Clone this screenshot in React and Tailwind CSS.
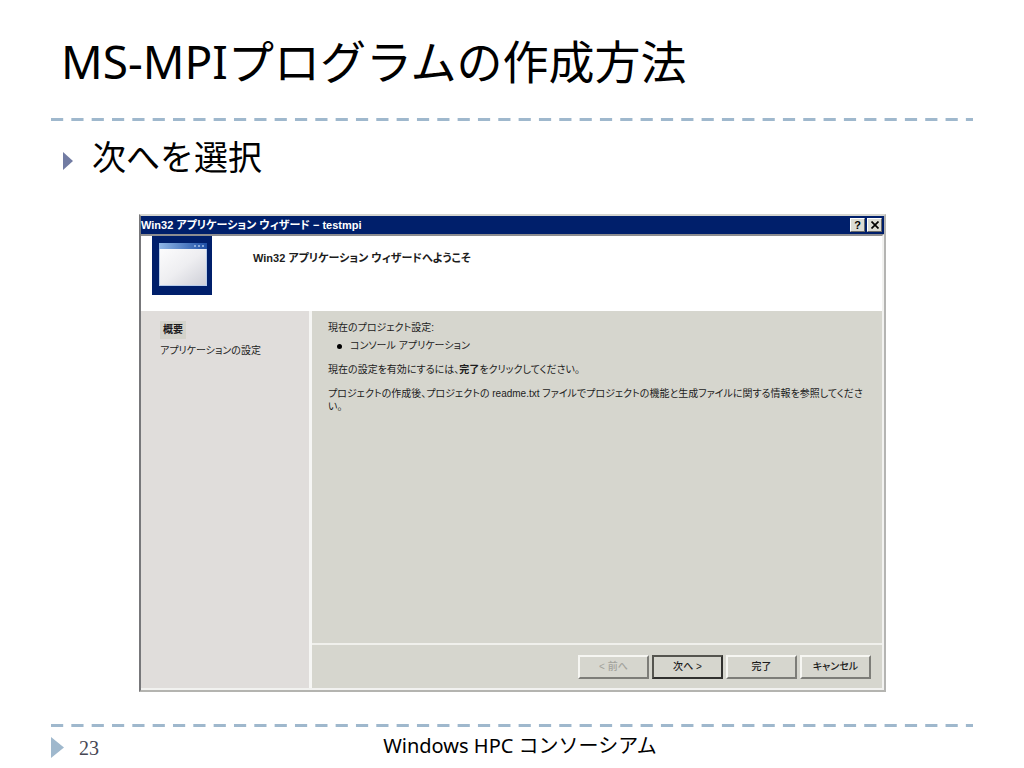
import React from "react";

const slideFont = "font-['Noto_Sans','Noto_Sans_CJK_JP',sans-serif]";
const dialogFont = "font-['Liberation_Sans','Noto_Sans_CJK_JP',sans-serif]";

function DashedRule() {
  return (
    <svg className="block h-[3px] w-full" aria-hidden="true">
      <line
        x1="0"
        y1="1.5"
        x2="100%"
        y2="1.5"
        pathLength="907"
        stroke="#9fb8cd"
        strokeWidth="3"
        strokeDasharray="12 8"
      />
    </svg>
  );
}

function CaptionButton({ label, children }) {
  return (
    <button
      type="button"
      aria-label={label}
      className="flex h-[14px] w-[15px] items-center justify-center border border-t-white border-l-white border-r-[#6b6b68] border-b-[#6b6b68] bg-[#dcdcd4] text-black"
    >
      {children}
    </button>
  );
}

function DialogButton({ children, primary, disabled }) {
  const edge = primary
    ? "border-2 border-t-[#55554f] border-l-[#55554f] border-r-[#30302e] border-b-[#30302e]"
    : "border-2 border-t-[#f6f6f2] border-l-[#f6f6f2] border-r-[#7d7d78] border-b-[#7d7d78]";
  const ink = disabled ? "text-[#a3a39c]" : "text-[#1c1c1c]";
  return (
    <button
      type="button"
      disabled={disabled}
      className={`h-6 w-[71px] bg-[#d6d6ce] text-[10px] leading-4 font-medium ${edge} ${ink}`}
    >
      {children}
    </button>
  );
}

function WizardIcon() {
  return (
    <svg className="ml-[11px] h-[59px] w-[60px]" viewBox="0 0 60 59" aria-hidden="true">
      <defs>
        <linearGradient id="pane" x1="0" y1="0" x2="1" y2="1">
          <stop offset="0" stopColor="#fcfcfd" />
          <stop offset="0.5" stopColor="#eeeef1" />
          <stop offset="1" stopColor="#cfd0d8" />
        </linearGradient>
        <linearGradient id="bar" x1="0" y1="0" x2="1" y2="0">
          <stop offset="0" stopColor="#8fb6e6" />
          <stop offset="1" stopColor="#1e4fa6" />
        </linearGradient>
      </defs>
      <rect width="60" height="59" fill="#001f6b" />
      <rect x="7" y="7" width="48" height="43" fill="#b9cdea" />
      <rect x="7" y="7" width="48" height="6" fill="url(#bar)" />
      <path d="M42 10h2M46 10h2M50 10h2" stroke="#a9c3ea" strokeWidth="1.5" />
      <rect x="8" y="13" width="46" height="36" fill="url(#pane)" />
    </svg>
  );
}

function WizardDialog() {
  return (
    <section
      aria-label="Win32 アプリケーション ウィザード - testmpi"
      className={`ml-[88px] mr-[87px] flex flex-1 flex-col border-2 border-t-[#d6d6d0] border-l-[#77777a] border-r-[#b4b4b2] border-b-[#b4b4b0] bg-[#d6d6ce] text-[10px] text-[#1c1c1c] [font-feature-settings:'palt'] ${dialogFont}`}
    >
      <div className="flex h-[18px] items-center justify-between bg-[#001f6b] pr-0.5 text-white">
        <h2 className="text-[11px] font-bold">Win32 アプリケーション ウィザード − testmpi</h2>
        <div className="flex gap-0.5">
          <CaptionButton label="ヘルプ">
            <span className="text-[11px] leading-3 font-bold">?</span>
          </CaptionButton>
          <CaptionButton label="閉じる">
            <svg className="size-2" viewBox="0 0 8 8" aria-hidden="true">
              <path d="M0.5 0.5l7 7M7.5 0.5l-7 7" stroke="currentColor" strokeWidth="1.7" />
            </svg>
          </CaptionButton>
        </div>
      </div>
      <header className="flex h-[77px] items-start border-t-2 border-r-2 border-t-[#8d8d90] border-r-[#f2f2f0] bg-white">
        <WizardIcon />
        <h3 className="mt-3 ml-[41px] text-[11px] leading-5 font-bold">
          Win32 アプリケーション ウィザードへようこそ
        </h3>
      </header>
      <div className="flex flex-1 border-r-2 border-b-2 border-[#f2f2f0]">
        <nav className="flex w-[171px] shrink-0 flex-col items-start border-r-[3px] border-[#f6f6f4] bg-[#e0dddb] pt-[10px] pl-[19px]">
          <a href="#overview" className="bg-[#d3d3cb] px-[3px] leading-[18px] font-bold">
            概要
          </a>
          <a href="#settings" className="mt-0.5 leading-5">
            アプリケーションの設定
          </a>
        </nav>
        <div className="flex flex-1 flex-col">
          <div className="flex-1 pt-2 pl-4">
            <p className="leading-[18px]">現在のプロジェクト設定:</p>
            <ul>
              <li className="flex items-center leading-[18px]">
                <span className="mr-2 ml-[9px] size-[5px] rounded-full bg-black" />
                コンソール アプリケーション
              </li>
            </ul>
            <p className="mt-1.5 leading-[18px]">
              現在の設定を有効にするには、<b>完了</b>をクリックしてください。
            </p>
            <p className="mt-2 leading-[13px]">
              プロジェクトの作成後、プロジェクトの readme.txt ファイルでプロジェクトの機能と生成ファイルに関する情報を参照してくださ
              <br />
              い。
            </p>
          </div>
          <div className="flex justify-end gap-[3px] border-t-2 border-[#f0f0ec] pt-2.5 pr-[11px] pb-[9px]">
            <DialogButton disabled>&lt; 前へ</DialogButton>
            <DialogButton primary>次へ &gt;</DialogButton>
            <DialogButton>完了</DialogButton>
            <DialogButton>キャンセル</DialogButton>
          </div>
        </div>
      </div>
    </section>
  );
}

export default function App() {
  return (
    <div className={`flex min-h-screen flex-col bg-white px-[51px] text-black ${slideFont}`}>
      <h1 className="pt-[26px] pb-[22px] pl-[10px] text-[46px] leading-[70px]">
        MS-MPIプログラムの作成方法
      </h1>
      <DashedRule />
      <main className="flex flex-1 flex-col">
        <ul className="pt-3 pb-8">
          <li className="flex items-center pl-3 text-[34px] leading-[49px]">
            <svg className="mt-1.5 mr-[19px] h-[18px] w-[10px]" viewBox="0 0 10 18" aria-hidden="true">
              <path d="M0 0L10 9L0 18Z" fill="#727ca3" />
            </svg>
            次へを選択
          </li>
        </ul>
        <WizardDialog />
      </main>
      <footer className="pt-8">
        <DashedRule />
        <div className="grid h-[41px] grid-cols-[1fr_auto_1fr] items-center">
          <div className="flex items-center gap-[15px] font-['Liberation_Serif',serif] text-[20px] text-[#464653]">
            <svg className="h-[21px] w-[13px]" viewBox="0 0 13 21" aria-hidden="true">
              <path d="M0 0L13 10.5L0 21Z" fill="#9fb8cd" />
            </svg>
            23
          </div>
          <p className="pb-1 pl-4 text-[20px] leading-7">Windows HPC コンソーシアム</p>
        </div>
      </footer>
    </div>
  );
}
